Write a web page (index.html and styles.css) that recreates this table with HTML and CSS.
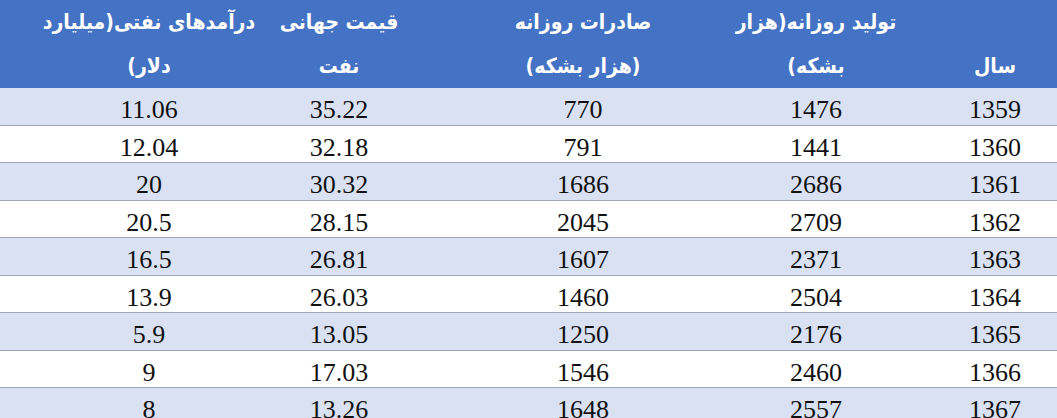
FILE: index.html
```html
<!DOCTYPE html>
<html lang="fa">
<head>
<meta charset="utf-8">
<link rel="stylesheet" href="styles.css">
</head>
<body>
<table class="oil" dir="rtl">
  <colgroup>
    <col class="c1"><col class="c2"><col class="c3"><col class="c4"><col class="c5">
  </colgroup>
  <thead>
    <tr>
      <th><div class="hd">سال</div></th>
      <th><div class="hd">تولید روزانه(هزار<br>بشکه)</div></th>
      <th><div class="hd">صادرات روزانه<br>(هزار بشکه)</div></th>
      <th><div class="hd">قیمت جهانی<br>نفت</div></th>
      <th class="last"><div class="hd">درآمدهای نفتی(میلیارد<br>دلار)</div></th>
    </tr>
  </thead>
  <tbody>
    <tr class="odd"><td>1359</td><td>1476</td><td>770</td><td>35.22</td><td class="last">11.06</td></tr>
    <tr><td>1360</td><td>1441</td><td>791</td><td>32.18</td><td class="last">12.04</td></tr>
    <tr class="odd"><td>1361</td><td>2686</td><td>1686</td><td>30.32</td><td class="last">20</td></tr>
    <tr><td>1362</td><td>2709</td><td>2045</td><td>28.15</td><td class="last">20.5</td></tr>
    <tr class="odd"><td>1363</td><td>2371</td><td>1607</td><td>26.81</td><td class="last">16.5</td></tr>
    <tr><td>1364</td><td>2504</td><td>1460</td><td>26.03</td><td class="last">13.9</td></tr>
    <tr class="odd"><td>1365</td><td>2176</td><td>1250</td><td>13.05</td><td class="last">5.9</td></tr>
    <tr><td>1366</td><td>2460</td><td>1546</td><td>17.03</td><td class="last">9</td></tr>
    <tr class="odd"><td>1367</td><td>2557</td><td>1648</td><td>13.26</td><td class="last">8</td></tr>
  </tbody>
</table>
</body>
</html>
```
FILE: styles.css
```css
html, body {
  margin: 0;
  padding: 0;
  background: #ffffff;
  overflow: hidden;
}
.oil {
  width: 1057px;
  table-layout: fixed;
  border-collapse: collapse;
  border-spacing: 0;
}
.c1 { width: 124px; }
.c2 { width: 234px; }
.c3 { width: 232px; }
.c4 { width: 256px; }
.c5 { width: 211px; }
.oil th {
  background: #4472c4;
  color: #ffffff;
  font-family: "DejaVu Sans Condensed", "DejaVu Sans", sans-serif;
  font-weight: bold;
  font-size: 21px;
  line-height: 44px;
  height: 88px;
  padding: 0;
  vertical-align: bottom;
  white-space: nowrap;
}
.hd {
  display: flex;
  flex-direction: column;
  align-items: center;
  text-align: center;
}
.oil td {
  font-family: "Liberation Serif", "Times New Roman", serif;
  font-size: 26px;
  color: #111111;
  height: 26.5px;
  padding: 10px 0 0 0;
  text-align: center;
  vertical-align: top;
  line-height: 24px;
  border-bottom: 1px solid #9ea7b7;
  white-space: nowrap;
}
.oil .last {
  padding-left: 87px;
}
.oil tr.odd td {
  background: #d9e1f2;
}
```
